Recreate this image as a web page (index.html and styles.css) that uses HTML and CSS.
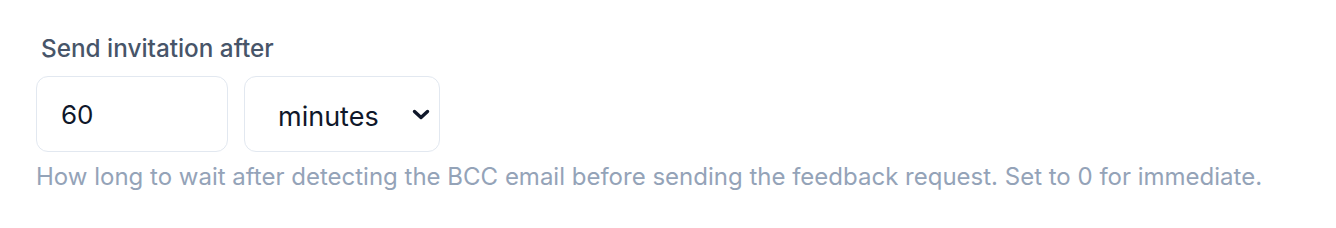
FILE: index.html
```html
<!DOCTYPE html>
<html>
<head>
<meta charset="utf-8">
<link rel="stylesheet" href="styles.css">
</head>
<body>
<div class="field">
  <label class="label">Send invitation after</label>
  <div class="row">
    <input class="num" type="text" value="60">
    <div class="select">
      <span class="select-text">minutes</span>
      <svg class="chev" width="20" height="14" viewBox="0 0 20 14"><path d="M3.5 3.5 L10 9.5 L16.5 3.5" fill="none" stroke="#0f172a" stroke-width="3.4" stroke-linecap="round" stroke-linejoin="round"/></svg>
    </div>
  </div>
  <p class="help">How long to wait after detecting the BCC email before sending the feedback request. Set to 0 for immediate.</p>
</div>
</body>
</html>
```
FILE: styles.css
```css
html, body { margin: 0; padding: 0; background: #fff; }
body { font-family: Inter, "Noto Sans", sans-serif; }
.field { padding: 32px 0 0 36px; }
.label { display: block; font-size: 24.3px; font-weight: 500; color: #475569; margin-left: 5px; line-height: 32px; }
.row { display: flex; gap: 16px; margin-top: 12px; }
.num { box-sizing: border-box; width: 192px; height: 76px; border: 1.5px solid #e2e8f0; border-radius: 12px; padding: 0 24px; font-family: inherit; font-size: 26px; color: #0f172a; outline: none; }
.select { box-sizing: border-box; width: 196px; height: 76px; border: 1.5px solid #e2e8f0; border-radius: 12px; display: flex; align-items: center; padding-left: 33px; padding-right: 8px; justify-content: space-between; }
.select-text { font-size: 27px; color: #0f172a; margin-top: 5px; }
.chev { margin-top: 1px; }
.help { margin: 9px 0 0 0; font-size: 24px; color: #94a3b8; line-height: 32px; }
```
